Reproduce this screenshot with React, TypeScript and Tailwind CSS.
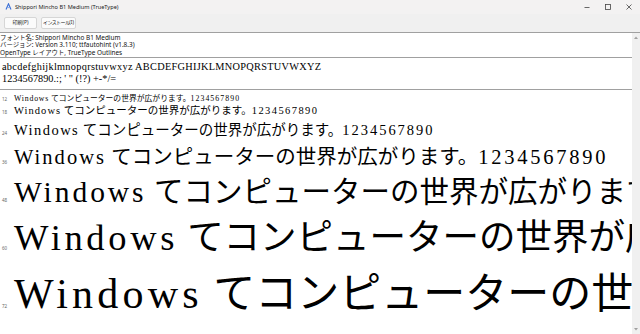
import React from "react";

const SAMPLE_JA = "てコンピューターの世界が広がります。";

const ROWS: { label: string; size: string; h: string }[] = [
  { label: "12", size: "text-[7.8px]", h: "h-[11px] leading-[11px]" },
  { label: "18", size: "text-[10.5px]", h: "h-[15px] leading-[15px]" },
  { label: "24", size: "text-[14.5px]", h: "h-[27px] leading-[27px]" },
  { label: "36", size: "text-[20.5px]", h: "h-[28px] leading-[28px]" },
  { label: "48", size: "text-[29.5px]", h: "h-[43px] leading-[43px]" },
  { label: "60", size: "text-[36.5px]", h: "h-[48px] leading-[48px]" },
  { label: "72", size: "text-[42px]", h: "h-[64px] leading-[64px]" },
];

const serif = "font-['Liberation_Serif','Noto_Sans_CJK_JP',serif]";
const ui = "font-['Noto_Sans','Noto_Sans_CJK_JP',sans-serif]";

function FontIcon() {
  return (
    <svg width="7" height="7" viewBox="0 0 7 7" className="shrink-0">
      <path d="M1 6.5 L3.5 0.8 L6 6.5" fill="none" stroke="#3b6fd6" strokeWidth="1.1" />
      <path d="M2.1 4.6 H4.9" stroke="#7aa2ea" strokeWidth="0.9" />
    </svg>
  );
}

function WindowControls() {
  return (
    <div className="flex items-center gap-[15px] pr-[8px]">
      <svg width="6" height="6" viewBox="0 0 6 6">
        <path d="M0.5 3.5 H5.5" stroke="#444" strokeWidth="0.8" />
      </svg>
      <svg width="6" height="6" viewBox="0 0 6 6">
        <rect x="0.5" y="0.5" width="5" height="5" fill="none" stroke="#444" strokeWidth="0.8" />
      </svg>
      <svg width="6" height="6" viewBox="0 0 6 6">
        <path d="M0.5 0.5 L5.5 5.5 M5.5 0.5 L0.5 5.5" stroke="#444" strokeWidth="0.8" />
      </svg>
    </div>
  );
}

function ToolButton({ children, w }: { children: React.ReactNode; w: string }) {
  return (
    <div className={`${w} h-[12px] flex items-center justify-center whitespace-nowrap rounded-[2px] border border-[#d6d6d6] bg-[#fbfbfb] text-[5px] text-[#222] ${ui}`}>
      {children}
    </div>
  );
}

function SampleRow({ label, size, h }: { label: string; size: string; h: string }) {
  return (
    <div className={`${h} whitespace-nowrap ${serif} text-black`}>
      <span className={`inline-block w-[14px] pl-[2px] text-[4.5px] text-[#666] ${ui}`}>{label}</span>
      <span className={size}>
        <span className="tracking-[0.1em]">Windows</span> {SAMPLE_JA}
        <span className="tracking-[0.135em]">1234567890</span>
      </span>
    </div>
  );
}

export default function App() {
  return (
    <div className="w-[640px] h-[334px] bg-[#f0f0f0] flex flex-col overflow-hidden">
      <div className="h-[14px] flex items-center justify-between bg-[#f3f2f2]">
        <div className={`flex items-center gap-[3px] pl-[5px] text-[5.6px] text-[#222] ${ui}`}>
          <FontIcon />
          <span>Shippori Mincho B1 Medium (TrueType)</span>
        </div>
        <WindowControls />
      </div>

      <div className="h-[18px] flex items-start gap-[4px] pl-[4px] pt-[3px]">
        <ToolButton w="w-[33px]">印刷(P)</ToolButton>
        <ToolButton w="w-[35px]">
          <span className="tracking-[-0.12em]">インストール</span>(I)
        </ToolButton>
      </div>

      <div className="h-px bg-[#a0a0a0]" />

      <div className="flex-1 flex min-h-0">
        <div className="flex-1 min-w-0 bg-white overflow-hidden">
          <div className={`h-[24px] pt-[0.5px] text-[6.4px] leading-[7.5px] text-[#111] ${ui}`}>
            <div>フォント名: Shippori Mincho B1 Medium</div>
            <div>バージョン: Version 3.110; ttfautohint (v1.8.3)</div>
            <div>OpenType レイアウト, TrueType Outlines</div>
          </div>
          <div className="h-px bg-[#a0a0a0]" />
          <div className={`h-[31px] pt-[3px] pl-[2px] text-[10.3px] leading-[12px] text-black whitespace-nowrap ${serif}`}>
            <div className="tracking-[0.3px]">abcdefghijklmnopqrstuvwxyz ABCDEFGHIJKLMNOPQRSTUVWXYZ</div>
            <div>1234567890.:; ' " (!?) +-*/=</div>
          </div>
          <div className="h-px bg-[#a0a0a0]" />
          {ROWS.map((r) => (
            <SampleRow key={r.label} {...r} />
          ))}
        </div>

        <div className="w-[8px] shrink-0 bg-[#f0f0f0] flex flex-col items-center justify-between py-[3px]">
          <svg width="4" height="3" viewBox="0 0 4 3">
            <path d="M0 3 L2 0.5 L4 3 Z" fill="#a0a0a0" />
          </svg>
          <svg width="4" height="3" viewBox="0 0 4 3">
            <path d="M0 0 L2 2.5 L4 0 Z" fill="#a0a0a0" />
          </svg>
        </div>
      </div>
    </div>
  );
}
